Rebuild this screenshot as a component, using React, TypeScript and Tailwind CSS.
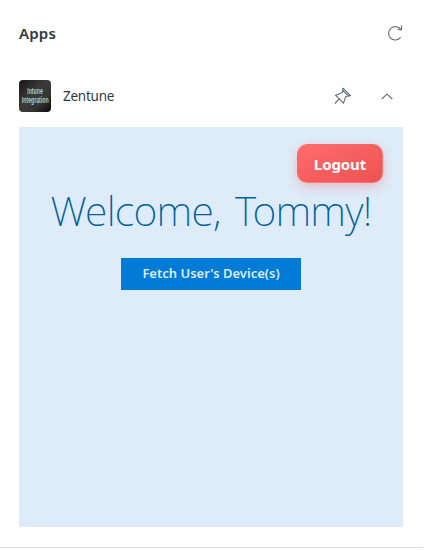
import React from 'react';

function RefreshIcon() {
  return (
    <svg width="16" height="16" viewBox="0 0 16 16" fill="none" stroke="#5c6970" strokeWidth="1.1">
      <path d="M13.6 12.4A6.7 6.7 0 1 1 14 4.8" />
      <path d="M14.5 .6V4.8H10.6" />
    </svg>
  );
}

function PinIcon() {
  return (
    <svg width="18" height="18" viewBox="0 0 18 18" fill="none" stroke="#5c6970" strokeWidth="1.1" strokeLinejoin="round">
      <path d="M9 1.2 16.6 8.6 14.5 9 8.6 3.1ZM8.9 3.4 8.2 5.7 1.5 8.2 9.5 16.2 11.6 9.9 14.4 8.9M5 12.2.9 16.5" />
    </svg>
  );
}

function ChevronUpIcon() {
  return (
    <svg width="12" height="7" viewBox="0 0 12 7" fill="none" stroke="#5c6970" strokeWidth="1.1">
      <path d="M.7 6 6 1.2 11.3 6" />
    </svg>
  );
}

function AppLogo() {
  return (
    <svg width="32" height="32" viewBox="0 0 32 32" className="rounded">
      <defs>
        <linearGradient id="logo-shade" x1="0" y1="0" x2="1" y2="1">
          <stop offset="0" stopColor="#171717" />
          <stop offset=".45" stopColor="#3b3b3b" />
          <stop offset=".7" stopColor="#343434" />
          <stop offset="1" stopColor="#080808" />
        </linearGradient>
      </defs>
      <rect width="32" height="32" fill="url(#logo-shade)" />
      <g fill="#a3cdca" textAnchor="middle" className="font-['Liberation_Sans',sans-serif] text-[8.5px] font-bold">
        <text transform="translate(16 13.5) scale(.61 1.05)">Intune</text>
        <text transform="translate(16.2 23.4) scale(.61 1.05)">Integration</text>
      </g>
    </svg>
  );
}

export default function App() {
  return (
    <div className="h-[550px] w-[426px] bg-white font-['Noto_Sans','Open_Sans',sans-serif] text-[#2f3941]">
      <div className="flex h-[548px] w-[423px] flex-col border-b border-[#d8d8d8] px-[19px]">
        <header className="mr-px flex h-[66px] items-center justify-between">
          <h1 className="text-[15px] leading-5 font-semibold tracking-[0.2px]">Apps</h1>
          <RefreshIcon />
        </header>
        <section className="w-[384px]">
          <div className="flex h-[61px] items-center pb-px">
            <AppLogo />
            <span className="ml-3 text-[13.5px] leading-5 tracking-[-0.25px]">Zentune</span>
            <div className="mr-[10px] ml-auto flex items-center gap-[29px]">
              <PinIcon />
              <ChevronUpIcon />
            </div>
          </div>
          <main className="flex h-[400px] flex-col items-center bg-[#deecf9] pt-[17px]">
            <button className="mr-5 flex h-[39px] w-[86px] items-center justify-center self-end rounded-[10px] border border-white/10 bg-linear-to-br from-[#ff6b6b] to-[#ee5253] pt-0.5 text-[15px] font-bold tracking-[-0.1px] text-white shadow-[0_4px_12px_rgba(238,82,83,0.3)]">
              Logout
            </button>
            <h2 className="mt-[2px] text-[41px] leading-[50px] font-extralight tracking-[-0.75px] whitespace-nowrap text-[#0060a2] [word-spacing:4.5px]">
              Welcome, Tommy!
            </h2>
            <button className="mt-[23px] h-8 w-[180px] bg-[#007cd8] text-[13px] font-semibold text-[#deecf9]">
              Fetch User's Device(s)
            </button>
          </main>
        </section>
      </div>
    </div>
  );
}
